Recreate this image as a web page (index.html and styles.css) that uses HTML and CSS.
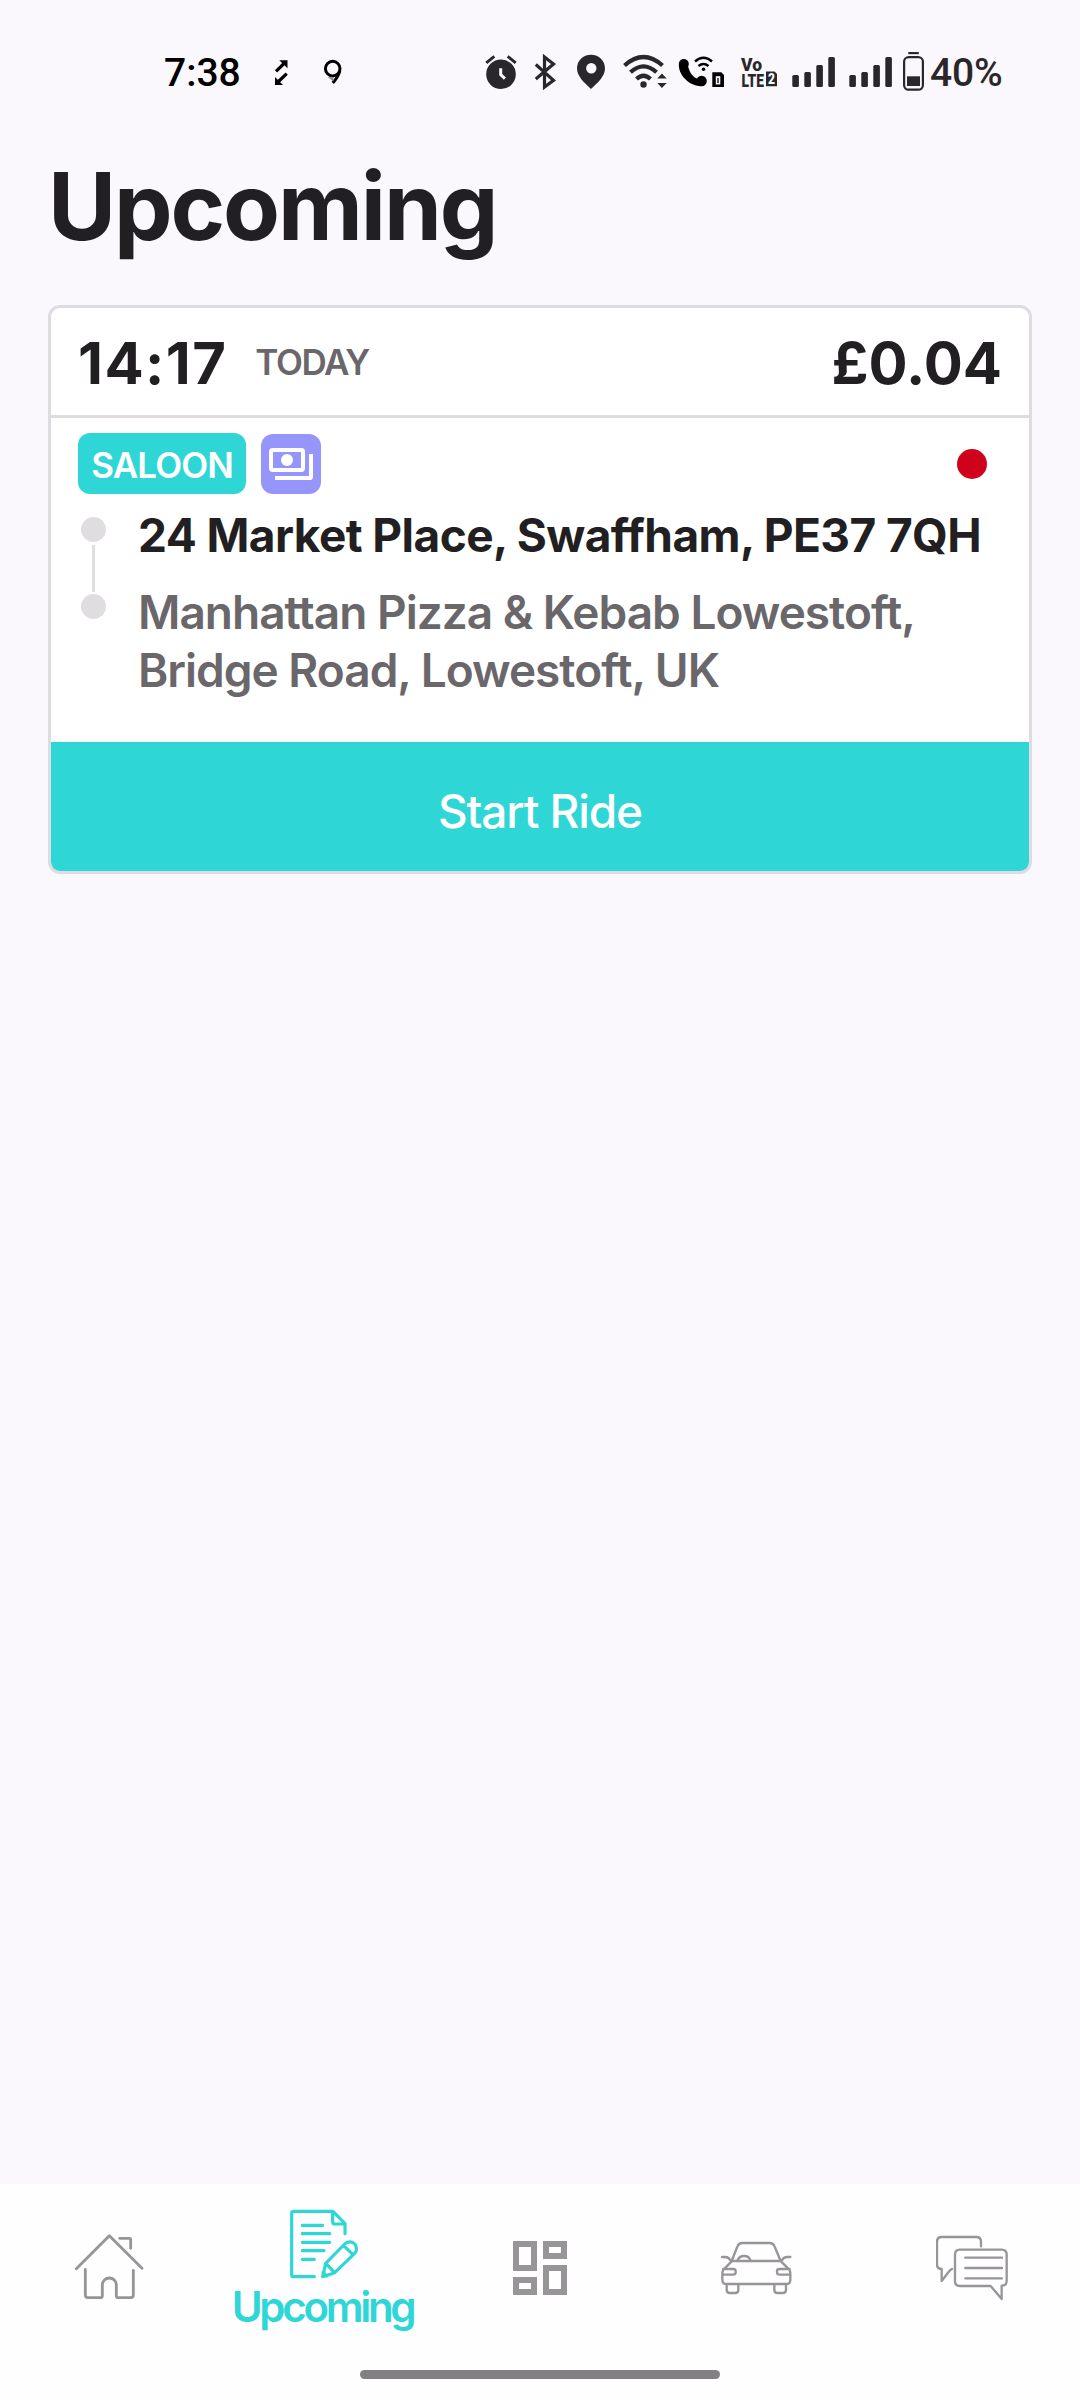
FILE: index.html
```html
<!DOCTYPE html>
<html lang="en">
<head>
  <meta charset="utf-8">
  <title>Upcoming</title>
  <link rel="stylesheet" href="styles.css">
</head>

<body>
  <div class="status-bar">
    <span class="clock">7:38</span>
    <svg class="status-left" viewBox="0 0 80 70">
      <path class="line" stroke-width="3.2" d="M6 31.3L14.5 23M16.7 33.7L8 42"/>
      <path d="M9.3 20.3h8.2v7.9zM5 37v8h8z"/>
      <circle class="line" stroke-width="3" cx="62.7" cy="28.6" r="7.3"/>
      <path class="line" stroke-width="3" d="M69.8 30.5C69 36 66 39 62.8 43"/>
      <path fill="#8c8a8d" d="M57.5 37l6 .5v4z"/>
    </svg>
    <svg class="status-icons" viewBox="0 0 260 70">
      <!-- alarm -->
      <circle cx="31" cy="34.3" r="14.8"/>
      <path class="line" stroke-width="3" d="M16.3 22.8l8-6.5M37.7 16.3l8 6.5"/>
      <path fill="none" stroke="#faf8fc" stroke-width="3" d="M30.7 28.3v6.4l4.2 4"/>
      <!-- bluetooth -->
      <path class="line" stroke-width="3.2" d="M65.8 24.5L83.5 40.3l-9 6.7v-30L83.5 24 65.8 39"/>
      <!-- location -->
      <path fill-rule="evenodd" d="M121 14.8c-8 0-14 6-14 13.7 0 7.5 7 14 14 20.5 7-6.5 14-13 14-20.5 0-7.7-6-13.7-14-13.7zm.3 8.2a5.2 5.2 0 1 1 0 10.4 5.2 5.2 0 0 1 0-10.4z"/>
      <!-- wifi -->
      <circle cx="173.5" cy="44.5" r="3.2"/>
      <path class="line" stroke-width="4.2" d="M154.5 25.5Q173.5 8.5 192.5 25.5M160.5 32.3Q173.5 20.5 186.5 32.3M166.5 39Q173.5 32.5 180.5 39"/>
      <path d="M187.3 38.5l4.6-5 4.8 5zM187.3 43h9.4l-4.8 5z"/>
      <!-- wifi calling -->
      <g fill="#000" stroke="#000">
        <path stroke="none" d="M208.8 25C209 37 221 46.2 231 46.2l-1-7c-5 0-10-5-12-13z"/>
        <circle stroke="none" cx="213.8" cy="24" r="5"/>
        <circle stroke="none" cx="231.6" cy="41" r="5.2"/>
        <circle stroke="none" cx="233.5" cy="29.3" r="1.8"/>
        <path fill="none" stroke-width="2.5" d="M225 21.5q8.500-7.500 17 0M228.500 26q5-4 10 0"/>
        <path stroke="none" d="M242.3 32.3h9l2.700 2.700v12h-11.700z"/>
        <rect stroke="none" fill="#faf8fc" x="245.8" y="36.2" width="4.5" height="8.2"/>
        <path fill="none" stroke-width="1.3" d="M248 38v5"/>
      </g>
    </svg>
    <svg class="status-icons status-right" viewBox="0 0 200 70">
      <g class="volte">
        <text x="11" y="30.8" font-size="19" textLength="21" lengthAdjust="spacingAndGlyphs">Vo</text>
        <text x="11.5" y="46.5" font-size="19" textLength="22.5" lengthAdjust="spacingAndGlyphs">LTE</text>
        <path d="M36 31.5h8.5l2.5 2.5v12.3h-11z"/>
        <text x="38" y="44" font-size="14" fill="#faf8fc" textLength="7" lengthAdjust="spacingAndGlyphs">2</text>
      </g>
      <!-- signal, sim 1 and sim 2 -->
      <rect x="62.3" y="35" width="6.6" height="12" rx="1.5"/>
      <rect x="74.3" y="32" width="6.6" height="15" rx="1.5"/>
      <rect x="86.3" y="25" width="6.6" height="22" rx="1.5"/>
      <rect x="98.3" y="17" width="6.6" height="30" rx="1.5"/>
      <rect x="119.3" y="35" width="6.6" height="12" rx="1.5"/>
      <rect x="131.3" y="32" width="6.6" height="15" rx="1.5"/>
      <rect x="143.3" y="25" width="6.6" height="22" rx="1.5"/>
      <rect x="155.3" y="17" width="6.6" height="30" rx="1.5"/>
      <!-- battery -->
      <rect x="178.3" y="12" width="10.5" height="2.2"/>
      <rect class="line" stroke-width="2.2" x="174.1" y="17.1" width="18.8" height="32.6" rx="4.5"/>
      <rect x="177" y="36.3" width="13" height="9.7"/>
    </svg>
    <span class="battery">40%</span>
  </div>

  <h1>Upcoming</h1>

  <div class="card">
    <div class="card-header">
      <span class="time">14:17</span>
      <span class="day">TODAY</span>
      <span class="price">£0.04</span>
    </div>
    <div class="card-body">
      <div class="tags">
        <span class="tag">SALOON</span>
        <span class="pay">
          <svg viewBox="0 0 180 180">
            <rect x="30" y="48" width="96" height="60" rx="5" fill="none" stroke="#fff" stroke-width="12"/>
            <circle cx="78" cy="78" r="18" fill="#fff"/>
            <path d="M42 132h104q4 0 4-4V60" fill="none" stroke="#fff" stroke-width="12"/>
          </svg>
        </span>
        <span class="alert"></span>
      </div>
      <div class="route">
        <div class="track">
          <span class="stop"></span>
          <span class="track-line"></span>
          <span class="stop"></span>
        </div>
        <div class="places">
          <div class="pickup">24 Market Place, Swaffham, PE37 7QH</div>
          <div class="dropoff">Manhattan Pizza &amp; Kebab Lowestoft,<br>Bridge Road, Lowestoft, UK</div>
        </div>
      </div>
    </div>
    <button class="start">Start Ride</button>
  </div>

  <nav>
    <div class="tabs">
      <a href="#">
        <svg viewBox="96 156 216 216">
          <path d="M109 266L208 167l98 98M239 175h29q4 0 4 4v26M136 268v77q0 8 8 8h37q6 0 6-6v-32a21 21 0 0 1 42 0v32q0 6 6 6h37q8 0 8-8v-74"/>
        </svg>
      </a>
      <a href="#" class="active">
        <svg viewBox="744 84 216 216">
          <path d="M823 290h-62q-6 0-6-6V100q0-6 6-6h118l36 37v30M878 95v30q0 7 7 7h28M787 136h61M787 161h82M787 187h82M787 212h65M787 238h36"/>
          <path d="M848 290l9-40 57-58a18 18 0 0 1 30 28l-60 58zM858 251l25 26M911 197l25 24M849 277l11 11"/>
        </svg>
        <span>Upcoming</span>
      </a>
      <a href="#">
        <svg viewBox="72 156 216 216">
          <path class="grid" d="M108 192h54v72h-54zM198 192h54v36h-54zM108 300h54v36h-54zM198 264h54v72h-54z"/>
        </svg>
      </a>
      <a href="#">
        <svg viewBox="720 156 216 216">
          <path class="thin" d="M755 243l17-43q4-11 16-11h80q12 0 16 11l18 43M753 243h152M755 244l-24 24q-4 5-4 13v18q0 13 13 13h178q13 0 13-13v-18q0-8-4-13l-24-24M726 231h10q10 0 15 10M931 231h-10q-10 0-15 10M773 240c6-15 32-17 38 0M729 267h30q8 0 8 6v4q0 7-8 7h-31M929 267h-30q-8 0-8 6v4q0 7 8 7h31M740 313v17q0 9 9 9h17q9 0 9-9v-17M883 313v17q0 9 9 9h17q9 0 9-9v-17"/>
        </svg>
      </a>
      <a href="#">
        <svg viewBox="108 156 216 216">
          <path class="thin" d="M243 199v-14q0-14-14-14H125q-14 0-14 14v68q0 14 14 14v36l25-32 6-4M179 209h126q15 0 15 15v78q0 15-15 15v40l-33-39h-93q-14 0-14-15v-79q0-15 14-15zM196 233h110M196 264h110M196 295h110"/>
        </svg>
      </a>
    </div>
    <div class="home-bar"></div>
  </nav>
</body>
</html>
```
FILE: styles.css
```css
* {
  box-sizing: border-box;
}
body {
  font-family: Inter, "Liberation Sans", sans-serif;
  background: #faf8fc;
  color: #221f23;
  margin: 0;
  height: 2400px;
  display: flex;
  flex-direction: column;
}
.status-bar {
  display: flex;
  height: 110px;
  padding: 40px 0 0 164px;
  font-family: Roboto, sans-serif;
  font-size: 39px;
  font-weight: 500;
  line-height: 66px;
}
.status-bar svg {
  height: 70px;
  fill: #2a272b;
  flex: none;
}
.status-bar .line {
  fill: none;
  stroke: #2a272b;
}
.clock {
  width: 106px;
  color: #000;
}
.status-bar .status-left {
  width: 80px;
  margin-right: 120px;
  fill: #000;
}
.status-bar .status-left .line {
  stroke: #000;
}
.status-icons {
  width: 260px;
}
.status-right {
  width: 200px;
}
.volte {
  font-family: Roboto, sans-serif;
  font-weight: 900;
}
.battery {
  color: #2a272b;
  letter-spacing: -0.2px;
}
h1 {
  margin: 40px 0 0 48px;
  font-size: 93px;
  line-height: 112px;
  font-weight: 700;
  letter-spacing: -2.1px;
}
.card {
  margin: 43px 48px 0;
  border: 3px solid #dedce0;
  border-radius: 12px;
  background: #fff;
  overflow: hidden;
}
.card-header {
  display: flex;
  align-items: center;
  height: 110px;
  padding: 0 27px;
  border-bottom: 3px solid #dedce0;
}
.time, .price {
  font-size: 58px;
  font-weight: 700;
  padding-top: 3px;
}
.time {
  letter-spacing: 1.4px;
}
.day {
  margin-left: 28px;
  font-size: 35px;
  font-weight: 600;
  letter-spacing: -1.4px;
  color: #6a676b;
}
.price {
  margin-left: auto;
}
.card-body {
  height: 324px;
  padding: 15px 27px 0;
}
.tags {
  display: flex;
  align-items: center;
  height: 61px;
}
.tag {
  width: 168px;
  height: 61px;
  border-radius: 12px;
  background: #2fd6d6;
  color: #fff;
  font-size: 35px;
  font-weight: 600;
  letter-spacing: -0.9px;
  line-height: 65px;
  text-align: center;
}
.pay {
  width: 60px;
  height: 60px;
  margin-left: 15px;
  border-radius: 12px;
  background: #9595fc;
}
.pay svg {
  display: block;
}
.alert {
  width: 30px;
  height: 30px;
  margin: 0 15px 0 auto;
  border-radius: 50%;
  background: #d0021b;
}
.route {
  display: flex;
  margin-top: 12px;
}
.track {
  display: flex;
  flex-direction: column;
  align-items: center;
  width: 30px;
  padding-top: 11px;
}
.stop {
  width: 25px;
  height: 25px;
  border-radius: 50%;
  background: #dfdde0;
}
.track-line {
  width: 3px;
  height: 47px;
  margin: 3px 0 2px;
  background: #dfdde0;
}
.places {
  margin-left: 30px;
  font-size: 46px;
  line-height: 58px;
  white-space: nowrap;
}
.pickup {
  font-weight: 700;
  letter-spacing: -0.57px;
}
.dropoff {
  margin-top: 19px;
  font-weight: 600;
  letter-spacing: -1px;
  color: #6a676b;
}
.start {
  display: block;
  width: 100%;
  height: 129px;
  padding: 9px 0 0;
  border: none;
  background: #2fd6d6;
  color: #fff;
  font-family: inherit;
  font-size: 46px;
  font-weight: 500;
  letter-spacing: -1.1px;
}
nav {
  margin-top: auto;
  height: 216px;
  background: #fefdff;
}
.tabs {
  display: flex;
  height: 168px;
}
.tabs a {
  display: flex;
  flex-direction: column;
  align-items: center;
  justify-content: center;
  width: 216px;
  color: #2fd6d6;
  font-size: 42px;
  font-weight: 600;
  letter-spacing: -3.3px;
  line-height: 50px;
  text-decoration: none;
}
.tabs .active {
  justify-content: flex-start;
  padding-top: 24px;
}
.tabs span {
  margin: 2px 3px 0 0;
}
.tabs svg {
  width: 72px;
  height: 72px;
  flex: none;
  fill: none;
  stroke: #989599;
  stroke-width: 8.5;
  stroke-linecap: round;
  stroke-linejoin: round;
}
.tabs .active svg {
  stroke: #2fd6d6;
  stroke-width: 9.5;
}
.tabs .thin {
  stroke-width: 7;
}
.tabs .grid {
  stroke-width: 18;
  stroke-linejoin: miter;
}
.home-bar {
  width: 360px;
  height: 9px;
  margin: 18px auto 0;
  border-radius: 5px;
  background: #838084;
}
```
